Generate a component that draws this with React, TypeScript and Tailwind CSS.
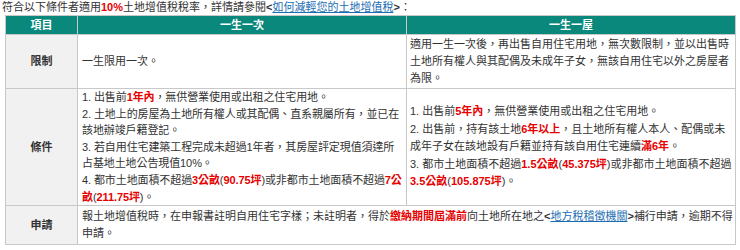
const RED = 'text-[#e60000] font-bold';

function R({ children }: { children: React.ReactNode }) {
  return <span className={RED}>{children}</span>;
}

export default function App() {
  return (
    <div
      className="w-[740px] h-[250px] bg-white text-[#333] text-[11px]"
      style={{ fontFamily: '"Liberation Sans", "Noto Sans CJK TC", sans-serif' }}
    >
      {/* intro line */}
      <div className="pl-[2px] h-[15px] leading-[14px] whitespace-nowrap">
        符合以下條件者適用<R>10%</R>土地增值稅稅率，詳情請參閱<span className="font-bold">&lt;</span>
        <a className="text-[#1a6db3] underline">如何減輕您的土地增值稅</a>
        <span className="font-bold">&gt;</span>：
      </div>

      <table className="ml-[5px] w-[730px] table-fixed border-collapse text-[11px] leading-[17px]">
        <colgroup>
          <col className="w-[72px]" />
          <col className="w-[329px]" />
          <col className="w-[329px]" />
        </colgroup>
        <thead>
          <tr className="bg-[#0a887b] text-white">
            <th className="h-[18px] border border-[#c8c8c8] font-bold leading-[18px] p-0">項目</th>
            <th className="h-[18px] border border-[#c8c8c8] font-bold leading-[18px] p-0">一生一次</th>
            <th className="h-[18px] border border-[#c8c8c8] font-bold leading-[18px] p-0">一生一屋</th>
          </tr>
        </thead>
        <tbody>
          <tr>
            <th className="bg-[#f1f1f1] border border-[#c8c8c8] font-bold text-[#333] align-middle">限制</th>
            <td className="border border-[#c8c8c8] pl-[4px] pr-0 align-middle whitespace-nowrap">一生限用一次。</td>
            <td className="h-[54px] border border-[#c8c8c8] pl-[3px] pr-0 py-[1px] align-middle whitespace-nowrap">
              適用一生一次後，再出售自用住宅用地，無次數限制，並以出售時<br />
              土地所有權人與其配偶及未成年子女，無該自用住宅以外之房屋者<br />
              為限。
            </td>
          </tr>
          <tr className="leading-[16.6px]">
            <th className="bg-[#f1f1f1] border border-[#c8c8c8] font-bold text-[#333] align-middle">條件</th>
            <td className="border border-[#c8c8c8] pl-[4px] pr-0 py-0 align-middle whitespace-nowrap tracking-[-0.1px]">
              1. 出售前<R>1年內</R>，無供營業使用或出租之住宅用地。<br />
              2. 土地上的房屋為土地所有權人或其配偶、直系親屬所有，並已在<br />
              該地辦竣戶籍登記。<br />
              3. 若自用住宅建築工程完成未超過1年者，其房屋評定現值須達所<br />
              占基地土地公告現值10%。<br />
              4. 都市土地面積不超過<R>3公畝</R>(<R>90.75坪</R>)或非都市土地面積不超過<R>7公</R><br />
              <R>畝</R>(<R>211.75坪</R>)。
            </td>
            <td className="border border-[#c8c8c8] pl-[3px] pr-0 py-0 align-middle whitespace-nowrap leading-[17.5px]">
              1. 出售前<R>5年內</R>，無供營業使用或出租之住宅用地。<br />
              2. 出售前，持有該土地<R>6年以上</R>，且土地所有權人本人、配偶或未<br />
              成年子女在該地設有戶籍並持有該自用住宅連續<R>滿6年</R>。<br />
              3. 都市土地面積不超過<R>1.5公畝</R>(<R>45.375坪</R>)或非都市土地面積不超過<br />
              <R>3.5公畝</R>(<R>105.875坪</R>)。
            </td>
          </tr>
          <tr>
            <th className="bg-[#f1f1f1] border border-[#c8c8c8] font-bold text-[#333] align-middle">申請</th>
            <td colSpan={2} className="h-[39px] border border-[#c8c8c8] pl-[4px] pr-0 py-[2px] align-middle whitespace-nowrap">
              報土地增值稅時，在申報書註明自用住宅字樣；未註明者，得於<R>繳納期間屆滿前</R>向土地所在地之
              <span className="font-bold">&lt;</span>
              <a className="text-[#1a6db3] underline">地方稅稽徵機關</a>
              <span className="font-bold">&gt;</span>補行申請，逾期不得<br />
              申請。
            </td>
          </tr>
        </tbody>
      </table>
    </div>
  );
}
